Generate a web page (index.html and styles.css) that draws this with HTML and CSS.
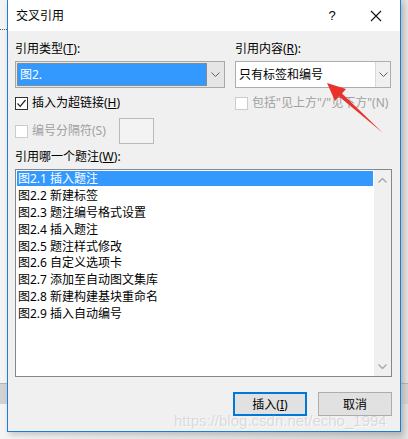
FILE: index.html
```html
<!DOCTYPE html>
<html lang="zh-CN">
<head>
    <meta charset="UTF-8">
    <title>交叉引用</title>
    <link rel="stylesheet" href="styles.css">
</head>
<body>
    <div class="bg-dots"></div>
    <div class="bg-bar"></div>

    <div class="dialog">
        <div class="titlebar">
            <span class="title">交叉引用</span>
            <span class="help">?</span>
            <span class="close">
                <svg width="12" height="12" viewBox="0 0 12 12"><path d="M1 1 L11 11 M11 1 L1 11" stroke="#111" stroke-width="1.1" fill="none"/></svg>
            </span>
        </div>

        <div class="content">
            <div class="top-row">
                <div class="col col-left">
                    <div class="label">引用类型(<u>T</u>):</div>
                    <div class="combo combo-list">
                        <div class="combo-field selected"><span>图2.</span></div>
                        <div class="combo-btn">
                            <svg width="9" height="5" viewBox="0 0 9 5"><path d="M0.5 0.5 L4.5 4.5 L8.5 0.5" stroke="#606060" fill="none"/></svg>
                        </div>
                    </div>
                    <div class="check-row">
                        <span class="checkbox checked">
                            <svg width="11" height="11" viewBox="0 0 11 11"><path d="M1.5 5.5 L4.2 8.3 L9.5 2" stroke="#222" stroke-width="1.2" fill="none"/></svg>
                        </span>
                        <span>插入为超链接(<u>H</u>)</span>
                    </div>
                    <div class="check-row sep-row disabled">
                        <span class="checkbox"></span>
                        <span>编号分隔符(S)</span>
                        <span class="sep-box"></span>
                    </div>
                </div>
                <div class="col col-right">
                    <div class="label">引用内容(<u>R</u>):</div>
                    <div class="combo">
                        <div class="combo-field"><span>只有标签和编号</span></div>
                        <div class="combo-btn light">
                            <svg width="9" height="5" viewBox="0 0 9 5"><path d="M0.5 0.5 L4.5 4.5 L8.5 0.5" stroke="#606060" fill="none"/></svg>
                        </div>
                    </div>
                    <div class="check-row disabled nowrap">
                        <span class="checkbox"></span>
                        <span>包括"见上方"/"见下方"(N)</span>
                    </div>
                </div>
            </div>

            <div class="label list-label">引用哪一个题注(<u>W</u>):</div>
            <div class="listbox">
                <ul class="items">
                    <li class="active">图2.1 插入题注</li>
                    <li>图2.2 新建标签</li>
                    <li>图2.3 题注编号格式设置</li>
                    <li>图2.4 插入题注</li>
                    <li>图2.5 题注样式修改</li>
                    <li>图2.6 自定义选项卡</li>
                    <li>图2.7 添加至自动图文集库</li>
                    <li>图2.8 新建构建基块重命名</li>
                    <li>图2.9 插入自动编号</li>
                </ul>
                <div class="scrollbar">
                    <svg width="9" height="5" viewBox="0 0 9 5"><path d="M0.5 4.5 L4.5 0.5 L8.5 4.5" stroke="#a8a8a8" stroke-width="1.4" fill="none"/></svg>
                    <svg width="9" height="5" viewBox="0 0 9 5"><path d="M0.5 0.5 L4.5 4.5 L8.5 0.5" stroke="#a8a8a8" stroke-width="1.4" fill="none"/></svg>
                </div>
            </div>

            <div class="buttons">
                <button class="btn default">插入(<u>I</u>)</button>
                <button class="btn">取消</button>
            </div>
        </div>

        <svg class="arrow" width="60" height="55" viewBox="326 82 60 55">
            <polygon points="326,83 345,89 341,93.5 382,133 338,96.5 334,101" fill="#e8322b"/>
        </svg>
        <div class="watermark">https://blog.csdn.net/echo_1994</div>
    </div>
</body>
</html>
```

FILE: styles.css
```css
body {
    margin: 0;
    width: 408px;
    height: 439px;
    overflow: hidden;
    position: relative;
    background: linear-gradient(to right, #f4f4f4 0, #f4f4f4 7px, #d6d6d6 401px, #e4e4e4 408px);
    font-family: "Noto Sans", "Noto Sans CJK SC", sans-serif;
    font-size: 12px;
    color: #000;
}

/* window behind the dialog */
.bg-dots {
    position: absolute;
    left: 0;
    top: 29px;
    width: 7px;
    border-top: 1px dotted #555;
}

.bg-bar {
    position: absolute;
    left: 0;
    top: 383px;
    width: 408px;
    height: 20px;
    background-color: #d2d2d2;
    border-top: 1px solid #b5b5b5;
}

.dialog {
    position: relative;
    margin-left: 7px;
    width: 392px;
    height: 431px;
    background-color: #f0f0f0;
    border: 1px solid #1b7fd4;
    border-top: none;
    box-shadow: 2px 3px 6px rgba(0,0,0,0.18);
    display: flex;
    flex-direction: column;
}

.titlebar {
    height: 31px;
    background-color: #fff;
    display: flex;
    align-items: center;
    padding-left: 8px;
}

.title {
    flex: 1;
    font-size: 12px;
    line-height: 16px;
}

.help {
    width: 16px;
    text-align: center;
    font-family: "Liberation Sans", sans-serif;
    font-size: 13px;
    margin-right: 30px;
}

.close {
    display: flex;
    width: 12px;
    margin-right: 18px;
}

.content {
    flex: 1;
    padding: 10px 8px 0 7px;
    display: flex;
    flex-direction: column;
}

.label {
    line-height: 16px;
    height: 16px;
}

.top-row {
    display: flex;
    gap: 10px;
}

.col-left {
    width: 210px;
}

.col-right {
    width: 156px;
}

.combo {
    margin-top: 4px;
    height: 27px;
    box-sizing: border-box;
    border: 1px solid #adadad;
    background-color: #fff;
    display: flex;
}

.combo-list {
    background-color: #e5e5e5;
    border-color: #a8a8a8;
}

.combo-field {
    flex: 1;
    display: flex;
    align-items: center;
    padding-left: 3px;
    line-height: 16px;
}

.combo-field.selected {
    margin: 1px 0 1px 1px;
    padding-left: 2px;
    background-color: #3399ff;
    color: #fff;
    border: 1px dotted #c9852e;
}

.combo-btn {
    width: 17px;
    display: flex;
    align-items: center;
    justify-content: center;
    background-color: #e5e5e5;
}

.combo-btn.light {
    width: 14px;
    background-color: #f0f0f0;
    border-left: 1px solid #d9d9d9;
}

.check-row {
    margin-top: 7px;
    display: flex;
    align-items: center;
    height: 16px;
    line-height: 16px;
}

.nowrap {
    white-space: nowrap;
}

.checkbox {
    flex: none;
    width: 13px;
    height: 13px;
    box-sizing: border-box;
    border: 1px solid #333;
    background-color: #fff;
    margin-right: 4px;
    display: flex;
    align-items: center;
    justify-content: center;
}

.disabled {
    color: #a0a0a0;
}

.disabled .checkbox {
    border-color: #cccccc;
}

.sep-row {
    height: 26px;
}

.sep-box {
    width: 35px;
    height: 26px;
    box-sizing: border-box;
    margin-left: 13px;
    border: 1px solid #b9b9b9;
    background-color: #f3f3f3;
}

.list-label {
    margin-top: 5px;
}

.listbox {
    margin-top: 4px;
    height: 208px;
    box-sizing: border-box;
    border: 1px solid #828790;
    background-color: #fff;
    display: flex;
}

.items {
    list-style: none;
    margin: 0;
    padding: 1px 1px 0 1px;
    flex: 1;
}

.items li {
    height: 16.9px;
    line-height: 15px;
    padding-left: 1px;
}

.items li.active {
    background: linear-gradient(#3399ff 0, #3399ff 15px, transparent 15px);
    color: #fff;
}

.scrollbar {
    width: 17px;
    background-color: #f0f0f0;
    display: flex;
    flex-direction: column;
    justify-content: space-between;
    align-items: center;
    padding: 8px 0 7px;
    box-sizing: border-box;
}

.buttons {
    margin-top: 15px;
    display: flex;
    justify-content: flex-end;
    gap: 11px;
}

.btn {
    width: 74px;
    height: 24px;
    box-sizing: border-box;
    background-color: #e1e1e1;
    border: 1px solid #adadad;
    font-family: "Noto Sans", "Noto Sans CJK SC", sans-serif;
    font-size: 12px;
    color: #000;
    padding: 0;
}

.btn.default {
    border: 2px solid #0078d7;
}

.arrow {
    position: absolute;
    left: 319px;
    top: 82px;
}

.watermark {
    position: absolute;
    left: 166px;
    top: 412px;
    font-family: "Liberation Sans", sans-serif;
    font-size: 15px;
    color: rgba(170,170,170,0.35);
    text-shadow: 1px 1px 0 rgba(255,255,255,0.6);
    white-space: nowrap;
}
```
